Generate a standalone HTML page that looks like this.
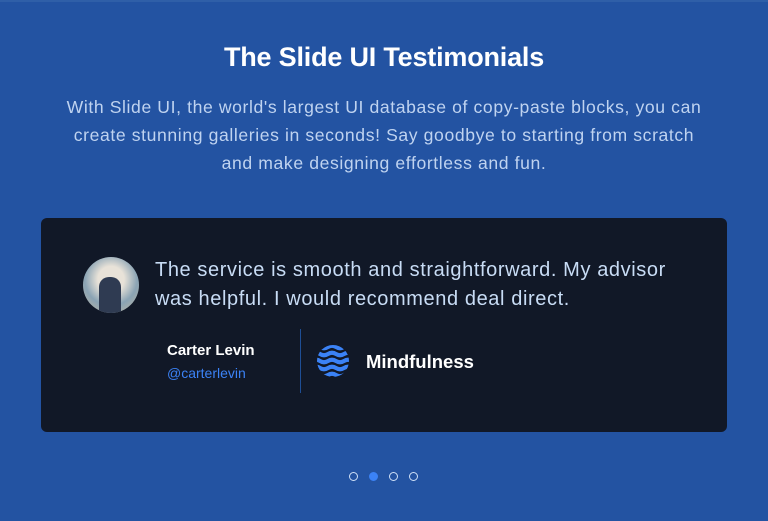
<!DOCTYPE html>
<html><head><style>
*{margin:0;padding:0;box-sizing:border-box}
body{width:768px;height:521px;background:#2353a2;font-family:"Liberation Sans",sans-serif;position:relative;overflow:hidden}
.top{position:absolute;left:0;top:0;width:768px;height:2px;background:#2f5fa8}
h1{position:absolute;top:42px;width:100%;text-align:center;color:#fff;font-size:27px;font-weight:700;letter-spacing:-0.2px}
p.sub{position:absolute;top:93px;left:59px;width:650px;text-align:center;color:#bfd3f0;font-size:17.6px;line-height:28px;letter-spacing:0.6px}
.card{position:absolute;left:41px;top:218px;width:686px;height:214px;background:#111827;border-radius:6px}
.av{position:absolute;left:42px;top:39px;width:56px;height:56px;border-radius:50%;background:radial-gradient(circle at 50% 40%,#e8e2d8 0 30%,#8aa3b4 60%,#c7b9a0);overflow:hidden}
.av:after{content:"";position:absolute;left:16px;top:20px;width:22px;height:40px;background:#2f3b52;border-radius:10px 10px 0 0}
.q{position:absolute;left:114px;top:38px;color:#c8dcf5;font-size:20px;line-height:29px;width:540px;letter-spacing:0.6px}
.name{position:absolute;left:126px;top:124px;color:#fff;font-weight:700;font-size:15px}
.h{position:absolute;left:126px;top:147px;color:#3b82f6;font-size:14px}
.div{position:absolute;left:259px;top:111px;width:1px;height:64px;background:#1e4e95}
.brand{position:absolute;left:325px;top:133px;color:#fff;font-weight:700;font-size:18.5px}
.logo{position:absolute;left:275px;top:126px}
.dots{position:absolute;top:472px;left:349px}
.dots span{position:absolute;top:0;width:9px;height:9px;border-radius:50%;border:1.5px solid #cfe0f7}
</style></head><body>
<div class="top"></div>
<h1>The Slide UI Testimonials</h1>
<p class="sub">With Slide UI, the world's largest UI database of copy-paste blocks, you can create stunning galleries in seconds! Say goodbye to starting from scratch and make designing effortless and fun.</p>
<div class="card">
<div class="av"></div>
<div class="q">The service is smooth and straightforward. My advisor was helpful. I would recommend deal direct.</div>
<div class="name">Carter Levin</div>
<div class="h">@carterlevin</div>
<div class="div"></div>
<svg class="logo" width="34" height="34" viewBox="0 0 34 34"><defs><clipPath id="c"><circle cx="17" cy="17" r="16"/></clipPath></defs><g clip-path="url(#c)" fill="none" stroke="#3b82f6" stroke-width="4.2"><path d="M-4 3 q4 -2.5 8 0 t8 0 t8 0 t8 0 t8 0"/><path d="M-4 10 q4 -2.5 8 0 t8 0 t8 0 t8 0 t8 0"/><path d="M-4 17 q4 -2.5 8 0 t8 0 t8 0 t8 0 t8 0"/><path d="M-4 24 q4 -2.5 8 0 t8 0 t8 0 t8 0 t8 0"/><path d="M-4 31 q4 -2.5 8 0 t8 0 t8 0 t8 0 t8 0"/></g></svg>
<div class="brand">Mindfulness</div>
</div>
<div class="dots"><span style="left:0"></span><span style="left:20px;background:#3b82f6;border-color:#3b82f6"></span><span style="left:40px"></span><span style="left:60px"></span></div>
</body></html>
